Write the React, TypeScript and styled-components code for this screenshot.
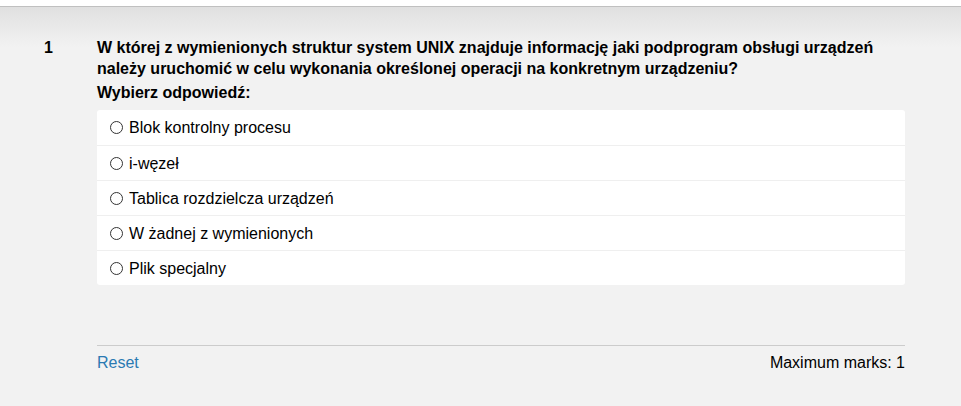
import { createGlobalStyle, styled } from 'styled-components';

const GlobalStyle = createGlobalStyle`
  html, body {
    margin: 0;
    padding: 0;
    background: #f2f2f2;
  }
  body {
    font-family: "Liberation Sans", Arial, sans-serif;
    color: #000;
  }
`;

const options = [
  'Blok kontrolny procesu',
  'i-węzeł',
  'Tablica rozdzielcza urządzeń',
  'W żadnej z wymienionych',
  'Plik specjalny',
];

const App = () => {
  return (
    <>
      <GlobalStyle />
      <TopStrip />
      <Page>
        <Question>
          <Number>1</Number>
          <Content>
            <Prompt>
              W której z wymienionych struktur system UNIX znajduje informację jaki podprogram obsługi urządzeń
              należy uruchomić w celu wykonania określonej operacji na konkretnym urządzeniu?
            </Prompt>
            <ChooseLabel>Wybierz odpowiedź:</ChooseLabel>
            <Answers>
              {options.map((opt, i) => (
                <AnswerRow key={opt}>
                  <Radio type="radio" name="q1" id={`q1-${i}`} />
                  <AnswerLabel htmlFor={`q1-${i}`}>{opt}</AnswerLabel>
                </AnswerRow>
              ))}
            </Answers>
          </Content>
        </Question>
        <Footer>
          <ResetLink href="#">Reset</ResetLink>
          <Marks>Maximum marks: 1</Marks>
        </Footer>
      </Page>
    </>
  );
};

const TopStrip = styled.div`
  height: 6px;
  background: #fff;
  border-bottom: 1px solid #c0c0c0;
`;

const Page = styled.div`
  height: 399px;
  box-sizing: border-box;
  background: linear-gradient(to bottom, #e0e0e0 0px, #f2f2f2 40px, #f2f2f2 100%);
  padding: 30px 56px 0 44px;
`;

const Question = styled.div`
  display: grid;
  grid-template-columns: 53px 808px;
`;

const Number = styled.div`
  font-size: 16px;
  font-weight: bold;
  line-height: 21px;
`;

const Content = styled.div`
  display: flex;
  flex-direction: column;
`;

const Prompt = styled.div`
  font-size: 16px;
  font-weight: bold;
  line-height: 21px;
`;

const ChooseLabel = styled.div`
  margin-top: 3px;
  font-size: 16px;
  font-weight: bold;
  line-height: 21px;
`;

const Answers = styled.div`
  margin-top: 7px;
  background: #fff;
  border-radius: 3px;
  display: flex;
  flex-direction: column;
`;

const AnswerRow = styled.div`
  display: flex;
  align-items: center;
  height: 35px;
  box-sizing: border-box;
  padding-left: 13px;
  border-top: 1px solid #efefef;

  &:first-child {
    border-top: none;
  }
`;

const Radio = styled.input`
  appearance: none;
  margin: 0 6px 0 0;
  width: 13px;
  height: 13px;
  border: 1px solid #333;
  border-radius: 50%;
  background: #fff;
  box-sizing: border-box;
`;

const AnswerLabel = styled.label`
  font-size: 16px;
  line-height: 19px;
`;

const Footer = styled.div`
  margin-top: 60px;
  margin-left: 53px;
  width: 808px;
  border-top: 1px solid #cccccc;
  padding-top: 7px;
  display: flex;
  justify-content: space-between;
  align-items: center;
  font-size: 16px;
  line-height: 20px;
`;

const ResetLink = styled.a`
  color: #2a7ab2;
  text-decoration: none;
`;

const Marks = styled.span`
  color: #000;
`;

export default App;
